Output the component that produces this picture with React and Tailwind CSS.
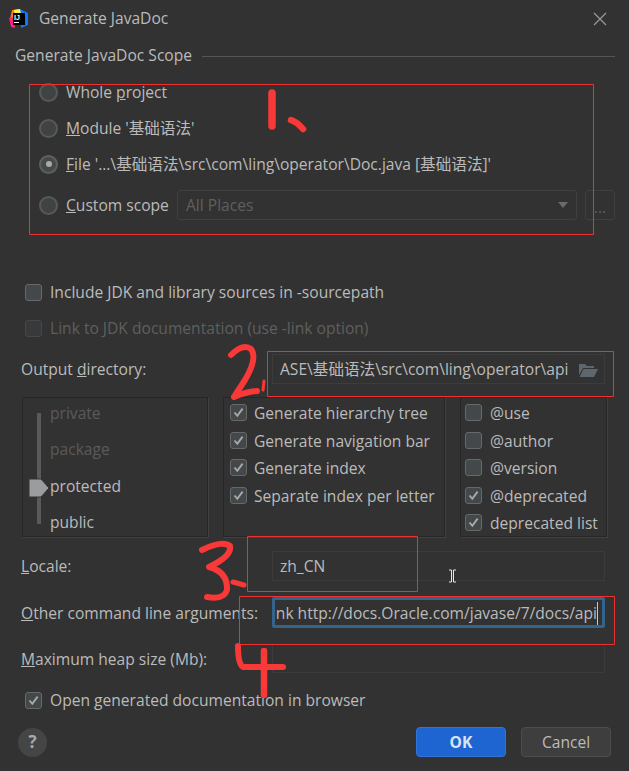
import React from "react";

const Check = () => (
  <svg width="11" height="11" viewBox="0 0 11 11" fill="none">
    <path d="M1.5 5.5 L4.3 8.8 L9.6 1.6" stroke="#a9a9a9" strokeWidth="1.9" />
  </svg>
);

const Checkbox = ({ checked, disabled }) => (
  <span
    className={`flex h-[17px] w-[17px] shrink-0 items-center justify-center rounded-[3px] border ${
      disabled
        ? "border-[#464849] bg-[#38393a]"
        : "border-[#666869] bg-[#43494a]"
    }`}
  >
    {checked && <Check />}
  </span>
);

const CheckRow = ({ label, checked = false, gap = "gap-[7px]" }) => (
  <div className={`flex h-[27.5px] items-center ${gap}`}>
    <Checkbox checked={checked} />
    <span className="whitespace-nowrap pt-[2px]">{label}</span>
  </div>
);

const Radio = ({ selected }) => (
  <span
    className={`flex h-[19px] w-[19px] shrink-0 items-center justify-center rounded-full border-2 ${
      selected ? "border-[#5e6060] bg-[#46494a]" : "border-[#565859] bg-[#404344]"
    }`}
  >
    {selected && <span className="h-[6px] w-[6px] rounded-full bg-[#a9a9a9]" />}
  </span>
);

const RadioRow = ({ selected, children }) => (
  <div className="flex h-[36px] items-center gap-[8px] pl-[39px]">
    <Radio selected={selected} />
    <span className="whitespace-nowrap pt-[2px]">{children}</span>
  </div>
);

const Field = ({ children, className = "" }) => (
  <div
    className={`flex w-[333px] items-center overflow-hidden whitespace-nowrap border border-[#3c3c3c] pl-[7px] pt-[2px] ${className}`}
  >
    {children}
  </div>
);

const FormRow = ({ label, children, className = "" }) => (
  <div className={`flex items-center justify-between pl-[21px] pr-[24px] ${className}`}>
    <span className="whitespace-nowrap pt-[2px]">{label}</span>
    {children}
  </div>
);

const Panel = ({ className = "", children }) => (
  <div className={`h-[140px] border border-[#262626] shadow-[1px_1px_0_#414141] ${className}`}>
    {children}
  </div>
);

const ProductIcon = () => (
  <svg width="20" height="20" viewBox="0 0 20 20" className="shrink-0">
    <polygon points="3,1 11,0 9,8 1,10" fill="#fe7a16" />
    <polygon points="0,9 6,8 6,19 2,18" fill="#f5257a" />
    <polygon points="11,0 19,4 19,16 12,19" fill="#087cfa" />
    <polygon points="5,1 11,0 12,5 6,6" fill="#fcf84a" />
    <rect x="4" y="4" width="12" height="12" fill="#000" />
    <rect x="5" y="13" width="5" height="1" fill="#fff" />
    <text x="5" y="11" fontSize="7" fontWeight="700" fill="#fff" fontFamily="Liberation Sans, sans-serif">
      IJ
    </text>
  </svg>
);

const FolderIcon = () => (
  <svg width="20" height="15" viewBox="0 0 20 15" className="shrink-0">
    <path d="M1 1 H7 L9 3 H16 V5 H5 L1 12 Z" fill="#5d676d" />
    <path d="M5.5 6 H20 L16 14 H1.5 Z" fill="#5d676d" />
  </svg>
);

// red pen marks drawn over the dialog
const Scribbles = () => (
  <svg
    className="pointer-events-none absolute left-0 top-0"
    width="629"
    height="771"
    viewBox="0 0 629 771"
    fill="none"
    stroke="#f93838"
    strokeLinecap="round"
    strokeLinejoin="round"
  >
    <path d="M272 93 V126" strokeWidth="7.5" />
    <path d="M291 120 Q297 122 303 129" strokeWidth="6.5" />
    <path d="M231 355 Q243 343 251 349 Q258 358 245 380 L234 397 Q246 392 257 391" strokeWidth="6" />
    <path d="M264 381 L263 390" strokeWidth="3" />
    <path d="M202 550 Q222 540 230 546 Q232 556 209 567 Q228 572 227 590 Q224 600 207 597" strokeWidth="6" />
    <path d="M233 582 L244 585" strokeWidth="5" />
    <path d="M238 646 Q238 664 243 667 L283 667" strokeWidth="6" />
    <path d="M264 651 V695" strokeWidth="6.5" />
    <g strokeWidth="1" strokeLinecap="butt" stroke="#f02f2f">
      <rect x="29.5" y="84.5" width="564" height="150" />
      <rect x="267.5" y="351.5" width="346" height="45" />
      <rect x="247.5" y="536.5" width="170" height="55" />
      <rect x="239.5" y="596.5" width="375" height="48" />
    </g>
    <path
      d="M449 570 H451.5 V582 H449 M456 570 H453.5 V582 H456"
      stroke="#e6e6e6"
      strokeWidth="1"
      strokeLinecap="butt"
    />
  </svg>
);

export default function App() {
  return (
    <div className="relative h-[771px] w-[629px] overflow-hidden bg-[#323232] font-['Open_Sans','Noto_Sans_CJK_SC',sans-serif] text-[15.6px] text-[#bbbbbb]">
      <div className="flex h-[38px] items-center gap-[10px] pl-[9px] pr-[22px]">
        <ProductIcon />
        <span>Generate JavaDoc</span>
        <svg className="ml-auto" width="14" height="14" viewBox="0 0 14 14" stroke="#9a9a9a" strokeWidth="1.2">
          <path d="M1 1 L13 13 M13 1 L1 13" />
        </svg>
      </div>

      <div className="flex h-[36px] items-center gap-[7px] pl-[15px] pr-[14px]">
        <span className="w-[180px] whitespace-nowrap">Generate JavaDoc Scope</span>
        <div className="h-px flex-1 bg-[#555555]" />
      </div>

      <RadioRow>
        Whole <span className="underline">p</span>roject
      </RadioRow>
      <RadioRow>
        <span className="underline">M</span>odule '基础语法'
      </RadioRow>
      <RadioRow selected>
        <span className="underline">F</span>ile '...\基础语法\src\com\ling\operator\Doc.java [基础语法]'
      </RadioRow>

      <div className="mt-[8px] flex h-[30px] items-center pl-[39px] pr-[14px]">
        <Radio />
        <span className="ml-[8px] w-[111px] whitespace-nowrap pt-[2px]">
          <span className="underline">C</span>ustom scope
        </span>
        <div className="flex h-full w-[400px] items-center justify-between rounded-[3px] border border-[#404040] pl-[8px] pr-[8px] text-[#5f5f5f]">
          <span className="pt-[2px]">All Places</span>
          <span className="h-0 w-0 border-x-[5px] border-t-[6px] border-x-transparent border-t-[#6a6a6a]" />
        </div>
        <div className="ml-[8px] flex h-full w-[30px] items-end justify-center rounded-[3px] border border-[#404040] pb-[6px] leading-[12px] text-[#5f5f5f]">
          ...
        </div>
      </div>

      <div className="mt-[54px] flex h-[36px] items-center gap-[8px] pl-[25px]">
        <Checkbox />
        <span className="pt-[2px]">Include JDK and library sources in -sourcepath</span>
      </div>
      <div className="flex h-[36px] items-center gap-[8px] pl-[25px] text-[#5f5f5f]">
        <Checkbox disabled />
        <span className="pt-[2px]">Link to JDK documentation (use -link option)</span>
      </div>

      <FormRow
        className="mt-[8px]"
        label={
          <>
            Output <span className="underline">d</span>irectory:
          </>
        }
      >
        <Field className="h-[30px] justify-between pr-[6px]">
          <span>ASE\基础语法\src\com\ling\operator\api</span>
          <FolderIcon />
        </Field>
      </FormRow>

      <div className="mt-[13px] flex pl-[22px]">
        <Panel className="relative flex w-[186px]">
          <div className="relative ml-[14px] mt-[15px] h-[111px] w-[4px] bg-[#5a5a5a]">
            <svg className="absolute left-[-9px] top-[65px]" width="22" height="20" viewBox="0 0 22 20">
              <path d="M1 1 H13 L21 10 L13 19 H1 Z" fill="#9a9c9d" stroke="#323232" strokeWidth="1" />
            </svg>
          </div>
          <div className="ml-[9px] flex h-[138px] flex-col justify-between pb-[2px] pt-[4px]">
            <span className="text-[#5a5a5a]">private</span>
            <span className="text-[#5a5a5a]">package</span>
            <span className="relative top-[1px]">protected</span>
            <span>public</span>
          </div>
        </Panel>
        <Panel className="ml-[15px] w-[222px] pl-[6px] pt-[1px]">
          <CheckRow checked label="Generate hierarchy tree" />
          <CheckRow checked label="Generate navigation bar" />
          <CheckRow checked label="Generate index" />
          <CheckRow checked label="Separate index per letter" />
        </Panel>
        <Panel className="ml-[15px] w-[147px] pl-[4px] pt-[1px]">
          <CheckRow gap="gap-[8px]" label="@use" />
          <CheckRow gap="gap-[8px]" label="@author" />
          <CheckRow gap="gap-[8px]" label="@version" />
          <CheckRow gap="gap-[8px]" checked label="@deprecated" />
          <CheckRow gap="gap-[8px]" checked label="deprecated list" />
        </Panel>
      </div>

      <FormRow
        className="mt-[14px]"
        label={
          <>
            <span className="underline">L</span>ocale:
          </>
        }
      >
        <Field className="h-[30px]">zh_CN</Field>
      </FormRow>

      <FormRow
        className="mt-[16px]"
        label={
          <>
            <span className="underline">O</span>ther command line arguments:
          </>
        }
      >
        <Field className="h-[31px] justify-end rounded-[2px] border-[3px] border-[#32648d] pr-[4px]">
          <span className="shrink-0 border-r border-[#c8c8c8]">-link http://docs.Oracle.com/javase/7/docs/api</span>
        </Field>
      </FormRow>

      <FormRow
        className="mt-[16px]"
        label={
          <>
            <span className="underline">M</span>aximum heap size (Mb):
          </>
        }
      >
        <Field className="h-[29px]" />
      </FormRow>

      <div className="mt-[9px] flex h-[36px] items-center gap-[8px] pl-[25px]">
        <Checkbox checked />
        <span className="pt-[2px]">
          Open <span className="underline">g</span>enerated documentation in browser
        </span>
      </div>

      <div className="mt-[9px] flex h-[30px] items-center pl-[18px] pr-[18px]">
        <div className="flex h-[29px] w-[29px] items-center justify-center rounded-full bg-[#454545] text-[17px] font-bold text-[#a8a8a8]">
          ?
        </div>
        <button className="ml-auto h-[30px] w-[90px] rounded-[4px] border border-[#2f75dc] bg-[#1f65d1] pt-[2px] font-bold text-[#d8e4f2]">
          OK
        </button>
        <button className="ml-[15px] h-[30px] w-[90px] rounded-[4px] border border-[#4d4d4d] bg-[#3e3e3e] pt-[2px]">
          Cancel
        </button>
      </div>

      <Scribbles />
    </div>
  );
}
